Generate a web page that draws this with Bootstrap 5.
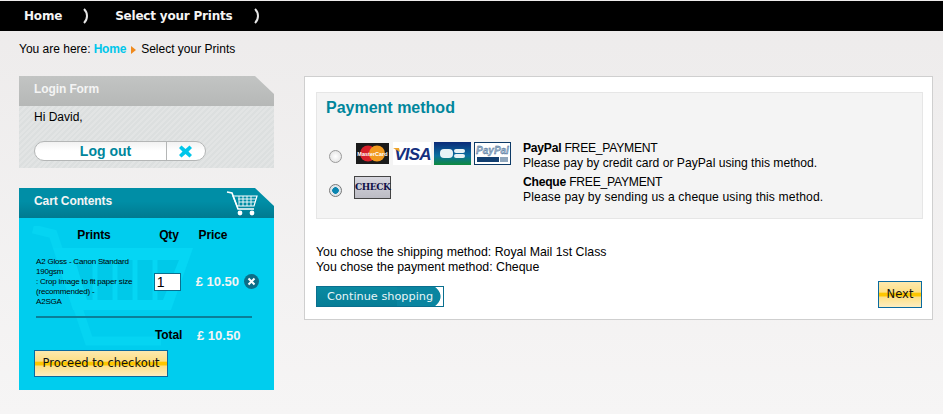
<!DOCTYPE html>
<html lang="en">
<head>
    <meta charset="UTF-8">
    <meta name="viewport" content="width=device-width, initial-scale=1.0">
    <title>Select your Prints</title>
    <link rel="stylesheet" href="https://cdn.jsdelivr.net/npm/bootstrap@5.3.0/dist/css/bootstrap.min.css">
    <style>
        html, body { height: 100%; }
        body {
            background: linear-gradient(#edebeb, #f6f5f5 414px);
            font-family: "Liberation Sans", Arial, sans-serif;
            font-size: 12px;
            line-height: 15px;
            color: #000;
            padding-top: 1px;
            background-color: #fff;
            overflow: hidden;
        }
        .topbar { height: 30px; background: #000; padding-left: 24px; }
        .topbar span { font: bold 12px/30px "DejaVu Sans", Verdana, sans-serif; color: #f4f4f4; letter-spacing: -.2px; }
        .topbar svg { margin-top: 7px; }
        .crumbs { margin: 11px 0 0 19px; height: 15px; }
        .crumbs a { color: #00c6ea; font-weight: bold; letter-spacing: -.2px; text-decoration: none; margin-left: 3px; }
        .crumb-arrow { border-left: 5px solid #f08a1d; border-top: 4px solid transparent; border-bottom: 4px solid transparent; margin: 0 5px 0 5px; }
        .page-body { margin: 19px 10px 0 19px; gap: 30px; align-items: flex-start; }
        .side { width: 255px; flex: none; }
        .box-head {
            height: 30px; padding: 4px 15px; font-size: 12px; line-height: 18px; letter-spacing: -.1px; font-weight: bold; color: #f4f4f4;
            clip-path: polygon(0 0, 236px 0, 100% 18px, 100% 100%, 0 100%);
            position: relative;
        }
        .login-head { background: linear-gradient(#c2c4c3, #b6b8b7); }
        .login-body {
            height: 62px; padding: 4px 15px 0;
            background: repeating-linear-gradient(135deg, #e2e4e4 0 2px, #dcdfdf 2px 4px);
            font-size: 12px;
        }
        .logout { margin-top: 16px; width: 172px; height: 20px; border: 1px solid #b4b6b6; border-radius: 10px; background: linear-gradient(#f2f2f2, #fff 50%); }
        .logout-text { width: 132px; border-right: 1px solid #b4b6b6; color: #00869c; font-weight: bold; font-size: 14px; line-height: 19px; text-align: center; padding-left: 10px; }
        .logout-x { flex: 1; padding-left: 11px; }
        .cart-box { margin-top: 20px; }
        .cart-head { background: linear-gradient(#008ea6 0 45%, #007a90); }
        .cart-icon { position: absolute; right: 16px; top: 3px; }
        .cart-body { height: 172px; background: #00cdee; padding: 0 15px; position: relative; overflow: hidden; }
        .cart-watermark { position: absolute; left: 12px; top: 8px; }
        .cart-row { position: relative; }
        .cart-titles { height: 36px; padding-top: 10px; font-weight: bold; line-height: 15px; font-size: 12px; letter-spacing: -.1px; }
        .col-prints { width: 120px; text-align: center; }
        .col-qty { width: 30px; text-align: center; }
        .col-price { width: 58px; text-align: center; }
        .item-name { width: 105px; margin-left: 2px; margin-right: 6px; font-size: 8px; line-height: 10px; letter-spacing: -.2px; }
        .qty-input { width: 27px; height: 18px; border: 1px solid #0a6f8f; background: #fff; font-size: 14px; line-height: 16px; padding-left: 2px; margin: 0 15px 0 10px; flex: none; }
        .price { color: #f4f4f4; font-weight: bold; font-size: 13px; white-space: nowrap; }
        .remove-x { width: 15px; height: 15px; border-radius: 50%; background: #0d6d87; margin-left: 5px; flex: none; }
        .cart-rule { height: 2px; background: #0a7f99; margin: 7px 7px 0 2px; }
        .total-row { height: 32px; padding: 2px 0 0 121px; }
        .total-label { font-weight: bold; font-size: 12px; letter-spacing: -.1px; width: 42px; }
        .btn-yellow {
            font: 11.5px/1 "DejaVu Sans", Verdana, sans-serif; color: #111;
            border: 1px solid #0a6aa0; border-radius: 0; padding: 1px 0 0;
            background: linear-gradient(#fde9ae, #fddf85 40%, #fdc600 46%, #fdc600 54%, #fde08a 62%, #fdedc0);
        }
        .btn-yellow:hover { color: #111; border-color: #0a6aa0; }
        .btn-checkout { width: 134px; height: 27px; display: block; }
        .main-panel { width: 630px; height: 244px; background: #fff; border: 1px solid #cfcfcf; padding: 15px 9px 0 11px; position: relative; }
        .pay-box { height: 127px; background: #f4f4f4; border: 1px solid #e6e6e6; padding: 5px 9px 0; font-size: 12.15px; }
        .pay-title { font-size: 16px; line-height: 19px; margin: 0; font-weight: bold; color: #00869c; }
        .pay-gap { height: 19px; }
        .pay-row { height: 40px; }
        .pay-row-cheque { margin-top: -6px; }
        .pay-logos { width: 167px; gap: 3px; flex: none; }
        .pay-logos-card { margin-left: 14px; margin-top: -5px; }
        .pay-logos-cheque { margin-left: 12px; margin-top: -5px; }
        .logo-visa { margin-left: 1px; }
        .pay-text-cheque { margin-left: 2px; }
        .pay-name { letter-spacing: -.25px; }
        .pay-wide { letter-spacing: .13px; }
        .radio-dot { width: 13px; height: 13px; flex: none; margin-left: 3px; border-radius: 50%; border: 1px solid #9a9a9a; background: radial-gradient(#fff, #ddd); }
        .radio-dot.on { background: radial-gradient(#0a85b0 0 3px, #dfe6ea 3.6px); border-color: #777; }
        .logo-check { font: bold 9px/20px "DejaVu Serif", serif; width: 37px; height: 23px; border: 1px solid #444; background: linear-gradient(#d6d6de, #bcbcc4); color: #101048; text-align: center; letter-spacing: -.4px; }
        .chosen { margin-top: 26px; font-size: 12.35px; }
        .foot-row { margin-top: 11px; }
        .btn-continue {
            width: 128px; height: 21px; border: 1px solid #0a6f8f; border-radius: 0; padding: 0 0 0 10px; text-align: left; display: block;
            font: 11.3px/1 "DejaVu Sans", Verdana, sans-serif; color: #e8f6f8;
            background:
                linear-gradient(#0a8aa2, #067d96) left / 80px 100% no-repeat,
                radial-gradient(ellipse 45px 20px at 79px 50%, #0a85a0 98%, #fff 100%);
        }
        .btn-continue:hover { color: #e8f6f8; border-color: #0a6f8f; }
        .btn-next { width: 44px; height: 27px; position: absolute; right: 10px; bottom: 11px; }
    </style>
</head>
<body>
    <div class="topbar d-flex align-items-start">
        <span>Home</span>
        <svg width="6" height="16" viewBox="0 0 6 16" style="margin:7px 26px 0 21px"><path d="M1 1C5 5 5 11 1 15" fill="none" stroke="#e6e6e6" stroke-width="2"/></svg>
        <span>Select your Prints</span>
        <svg width="6" height="16" viewBox="0 0 6 16" style="margin:7px 0 0 21px"><path d="M1 1C5 5 5 11 1 15" fill="none" stroke="#e6e6e6" stroke-width="2"/></svg>
    </div>

    <div class="crumbs d-flex align-items-center">
        <span>You are here:</span>
        <a href="#">Home</a>
        <i class="crumb-arrow"></i>
        <span>Select your Prints</span>
    </div>

    <div class="page-body d-flex">
        <div class="side">
            <div class="box-head login-head">Login Form</div>
            <div class="login-body">
                Hi David,
                <div class="logout d-flex">
                    <div class="logout-text">Log out</div>
                    <div class="logout-x d-flex align-items-center">
                        <svg width="15" height="13" viewBox="0 0 15 13"><path d="M1 3 3.5 .5 7.5 4 11.5 .5 14 3 10.5 6.5 14 10 11.5 12.5 7.5 9 3.5 12.5 1 10 4.5 6.5Z" fill="#00c6ea"/></svg>
                    </div>
                </div>
            </div>

            <div class="cart-box">
                <div class="box-head cart-head">Cart Contents
                    <svg class="cart-icon" width="32" height="26" viewBox="0 0 32 26">
                        <path d="M1 1 6 2 12 18H28" fill="none" stroke="#fff" stroke-width="1.6"/>
                        <path d="M7 5H31L28 15H11Z" fill="none" stroke="#fff" stroke-width="1.2"/>
                        <path d="M12 8H30M13 11H29M13 5V15M17 5V15M21 5V15M25 5V15" stroke="#fff" stroke-width=".9"/>
                        <circle cx="14" cy="22" r="2.4" fill="#fff"/><circle cx="26" cy="22" r="2.4" fill="#fff"/>
                    </svg>
                </div>
                <div class="cart-body">
                    <svg class="cart-watermark" width="190" height="160" viewBox="0 0 190 160">
                        <path d="M2 3 22 8 58 115H130" fill="none" stroke="#05d4f2" stroke-width="9"/>
                        <path d="M22 22H162L140 84H42Z" fill="#05d6f4"/>
                        <path d="M44 34H148L132 74H56Z" fill="#00c9e9"/>
                        <path d="M64 34V74M84 34V74M104 34V74M124 34V74" stroke="#05d6f4" stroke-width="5"/>
                    </svg>
                    <div class="cart-row cart-titles d-flex">
                        <div class="col-prints">Prints</div>
                        <div class="col-qty">Qty</div>
                        <div class="col-price">Price</div>
                    </div>
                    <div class="cart-row d-flex align-items-center" style="height:55px">
                        <div class="item-name">A2 Gloss - Canon Standard 190gsm<br>: Crop image to fit paper size (recommended) -<br>A2SGA</div>
                        <div class="qty-input">1</div>
                        <div class="price">£ 10.50</div>
                        <div class="remove-x d-flex align-items-center justify-content-center">
                            <svg width="9" height="9" viewBox="0 0 9 9"><path d="M1.5 1.5 7.5 7.5M7.5 1.5 1.5 7.5" stroke="#fff" stroke-width="2"/></svg>
                        </div>
                    </div>
                    <div class="cart-row cart-rule"></div>
                    <div class="cart-row total-row d-flex align-items-center">
                        <div class="total-label">Total</div>
                        <div class="price">£ 10.50</div>
                    </div>
                    <button type="button" class="btn btn-yellow btn-checkout cart-row">Proceed to checkout</button>
                </div>
            </div>
        </div>

        <div class="main-panel">
            <div class="pay-box">
                <h2 class="pay-title">Payment method</h2>
                <div class="pay-gap"></div>
                <div class="pay-row d-flex align-items-center">
                    <span class="radio-dot"></span>
                    <div class="pay-logos pay-logos-card d-flex align-items-center">
                        <svg width="33" height="21" viewBox="0 0 33 21"><rect width="33" height="21" fill="#1a1a1a"/><circle cx="12" cy="10.5" r="8" fill="#d8202a"/><circle cx="21" cy="10.5" r="8" fill="#f29a1f"/><text x="16.5" y="13" text-anchor="middle" font-family="Liberation Sans" font-size="5.5" font-weight="bold" fill="#fff">MasterCard</text></svg>
                        <svg class="logo-visa" width="38" height="23" viewBox="0 0 38 23"><rect width="38" height="23" fill="#fff"/><text x="19.5" y="18" text-anchor="middle" font-family="Liberation Sans" font-style="italic" font-size="17" font-weight="bold" fill="#15307f" letter-spacing="-.8">VISA</text><path d="M0 6H6L7 10Z" fill="#eda32a"/></svg>
                        <svg width="37" height="23" viewBox="0 0 37 23"><defs><linearGradient id="cbg" x1="0" y1="0" x2="0" y2="1"><stop offset="0" stop-color="#0b2a78"/><stop offset=".6" stop-color="#0a6fa0"/><stop offset="1" stop-color="#0f8a3c"/></linearGradient></defs><rect width="37" height="23" fill="url(#cbg)"/><rect x="6" y="7" width="13" height="9" rx="4" fill="#e8f2f6"/><rect x="20" y="7" width="11" height="4" rx="2" fill="#e8f2f6"/><rect x="20" y="12" width="11" height="4" rx="2" fill="#e8f2f6"/></svg>
                        <svg width="37" height="23" viewBox="0 0 37 23"><rect x=".5" y=".5" width="36" height="22" fill="#fff" stroke="#0d3a66"/><text x="18.5" y="12" text-anchor="middle" font-family="Liberation Sans" font-style="italic" font-size="10" font-weight="bold" fill="#9db4cc" stroke="#2d5a88" stroke-width=".3">PayPal</text><rect x="3" y="15" width="22" height="5" fill="#123f70"/><rect x="26" y="15" width="8" height="5" fill="#8fa6bc"/></svg>
                    </div>
                    <div><span class="pay-name"><b>PayPal</b> FREE_PAYMENT</span><br>Please pay by credit card or PayPal using this method.</div>
                </div>
                <div class="pay-row pay-row-cheque d-flex align-items-center">
                    <span class="radio-dot on"></span>
                    <div class="pay-logos pay-logos-cheque d-flex align-items-center"><div class="logo-check">CHECK</div></div>
                    <div class="pay-text-cheque"><span class="pay-name"><b>Cheque</b> FREE_PAYMENT</span><br><span class="pay-wide">Please pay by sending us a cheque using this method.</span></div>
                </div>
            </div>
            <div class="chosen">
                You chose the shipping method: Royal Mail 1st Class<br>
                You chose the payment method: Cheque
            </div>
            <div class="foot-row">
                <button type="button" class="btn btn-continue">Continue shopping</button>
            </div>
            <button type="button" class="btn btn-yellow btn-next">Next</button>
        </div>
    </div>
</body>
</html>
